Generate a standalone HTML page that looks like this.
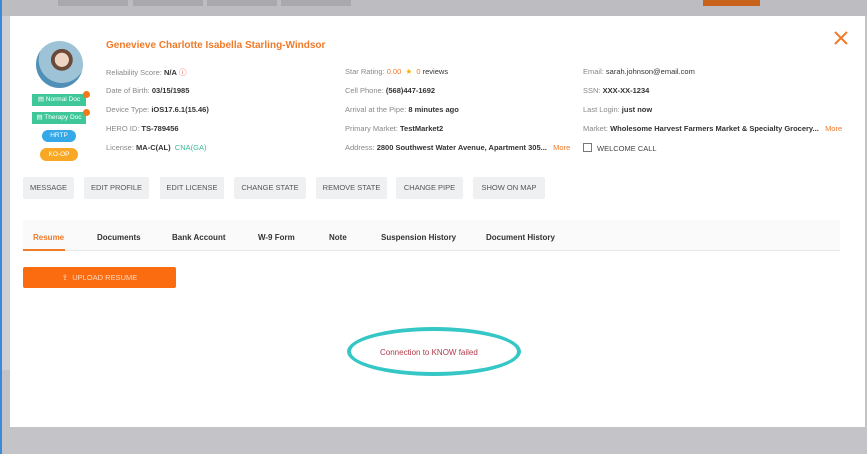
<!DOCTYPE html>
<html><head><meta charset="utf-8"><style>
*{box-sizing:border-box;margin:0;padding:0}
body{width:867px;height:454px;overflow:hidden;background:#c4c3c8;font-family:"Liberation Sans",sans-serif;position:relative}
.abs{position:absolute}
.modal{left:10px;top:16px;width:855px;height:411px;background:#fff}
.lbl{font-size:7.5px;color:#888;white-space:nowrap}
.lbl b{color:#333;font-weight:bold}
.btn{position:absolute;top:177px;height:22px;background:#eef0f2;color:#555;font-size:7.5px;line-height:22px;text-align:center;border-radius:2px}
.tab{position:absolute;top:233px;font-size:8px;color:#333;font-weight:bold}
.tag{position:absolute;font-size:6.5px;color:#fff;text-align:center}
</style></head><body>
<div class="abs" style="left:0;top:0;width:867px;height:16px;background:#bdbdc1"></div>
<div class="abs" style="left:58px;top:0;width:70px;height:6px;background:#a9a9ad"></div>
<div class="abs" style="left:133px;top:0;width:70px;height:6px;background:#a9a9ad"></div>
<div class="abs" style="left:207px;top:0;width:70px;height:6px;background:#a9a9ad"></div>
<div class="abs" style="left:281px;top:0;width:70px;height:6px;background:#a9a9ad"></div>
<div class="abs" style="left:703px;top:0;width:57px;height:6px;background:#c8611a"></div>
<div class="abs" style="left:0;top:0;width:2px;height:454px;background:#3a8ad8"></div>
<div class="abs" style="left:2px;top:16px;width:8px;height:354px;background:#d0d0d4"></div>
<div class="abs modal"></div>
<div class="abs" style="left:36px;top:41px;width:47px;height:47px;border-radius:50%;background:radial-gradient(circle at 55% 40%,#f0d5c5 0 18%,#6b4a3a 19% 28%,#9fc3d6 29% 60%,#4f8fb8 61%)"></div>
<div class="tag" style="left:32px;top:94px;width:54px;height:12px;line-height:12px;background:#3fc79a">▤ Normal Doc</div>
<div class="abs" style="left:83px;top:91px;width:7px;height:7px;border-radius:50%;background:#f07a1a"></div>
<div class="tag" style="left:32px;top:112px;width:54px;height:12px;line-height:12px;background:#3fc79a">▤ Therapy Doc</div>
<div class="abs" style="left:83px;top:109px;width:7px;height:7px;border-radius:50%;background:#f07a1a"></div>
<div class="tag" style="left:42px;top:130px;width:34px;height:12px;line-height:12px;background:#34a8e8;border-radius:6px">HRTP</div>
<div class="tag" style="left:40px;top:148px;width:38px;height:13px;line-height:13px;background:#f9a825;border-radius:7px">KO-OP</div>
<div class="abs" style="left:106px;top:40px;font-size:10px;color:#ef7a2a;font-weight:bold">Genevieve Charlotte Isabella Starling-Windsor</div>
<svg class="abs" style="left:834px;top:31px" width="14" height="14" viewBox="0 0 14 14"><path d="M1 1L13 13M13 1L1 13" stroke="#ef7a2a" stroke-width="2"/></svg>
<div class="abs lbl" style="left:106px;top:67px">Reliability Score: <b>N/A</b> <span style="color:#e44">ⓘ</span></div>
<div class="abs lbl" style="left:106px;top:86px">Date of Birth: <b>03/15/1985</b></div>
<div class="abs lbl" style="left:106px;top:105px">Device Type: <b>iOS17.6.1(15.46)</b></div>
<div class="abs lbl" style="left:106px;top:124px">HERO ID: <b>TS-789456</b></div>
<div class="abs lbl" style="left:106px;top:143px">License: <b>MA-C(AL)</b> &nbsp;<span style="color:#3bb89a">CNA(GA)</span></div>
<div class="abs lbl" style="left:345px;top:67px">Star Rating: <span style="color:#ef7a2a">0.00</span> &nbsp;<span style="color:#f5b301">★</span> &nbsp;<span style="color:#ef7a2a">0</span> <b style="font-weight:normal;color:#333">reviews</b></div>
<div class="abs lbl" style="left:345px;top:86px">Cell Phone: <b>(568)447-1692</b></div>
<div class="abs lbl" style="left:345px;top:105px">Arrival at the Pipe: <b>8 minutes ago</b></div>
<div class="abs lbl" style="left:345px;top:124px">Primary Market: <b>TestMarket2</b></div>
<div class="abs lbl" style="left:345px;top:143px">Address: <b>2800 Southwest Water Avenue, Apartment 305...</b> &nbsp;&nbsp;<span style="color:#ef7a2a">More</span></div>
<div class="abs lbl" style="left:583px;top:67px">Email: <b style="font-weight:normal">sarah.johnson@email.com</b></div>
<div class="abs lbl" style="left:583px;top:86px">SSN: <b>XXX-XX-1234</b></div>
<div class="abs lbl" style="left:583px;top:105px">Last Login: <b>just now</b></div>
<div class="abs lbl" style="left:583px;top:124px">Market: <b>Wholesome Harvest Farmers Market &amp; Specialty Grocery...</b> &nbsp;&nbsp;<span style="color:#ef7a2a">More</span></div>
<div class="abs" style="left:583px;top:143px;width:9px;height:9px;border:1px solid #777"></div>
<div class="abs lbl" style="left:597px;top:144px;color:#444">WELCOME CALL</div>
<div class="btn" style="left:23px;width:51px">MESSAGE</div>
<div class="btn" style="left:84px;width:65px">EDIT PROFILE</div>
<div class="btn" style="left:160px;width:64px">EDIT LICENSE</div>
<div class="btn" style="left:234px;width:72px">CHANGE STATE</div>
<div class="btn" style="left:316px;width:71px">REMOVE STATE</div>
<div class="btn" style="left:396px;width:67px">CHANGE PIPE</div>
<div class="btn" style="left:473px;width:72px">SHOW ON MAP</div>
<div class="abs" style="left:23px;top:220px;width:817px;height:31px;background:#fafafa;border-bottom:1px solid #e8e8e8"></div>
<div class="tab" style="left:33px;color:#ef7a2a">Resume</div>
<div class="abs" style="left:23px;top:249px;width:42px;height:2px;background:#ef7a2a"></div>
<div class="tab" style="left:97px">Documents</div>
<div class="tab" style="left:172px">Bank Account</div>
<div class="tab" style="left:258px">W-9 Form</div>
<div class="tab" style="left:329px">Note</div>
<div class="tab" style="left:381px">Suspension History</div>
<div class="tab" style="left:486px">Document History</div>
<div class="abs" style="left:23px;top:267px;width:153px;height:21px;background:#fb6c10;border-radius:2px;color:#ffd9c0;font-size:7.5px;line-height:21px;text-align:center">⇪ &nbsp;UPLOAD RESUME</div>
<div class="abs" style="left:347px;top:327px;width:174px;height:49px;border:4px solid #35c6c6;border-radius:50%"></div>
<div class="abs" style="left:380px;top:348px;font-size:8px;color:#b03a4a">Connection to KNOW failed</div>
</body></html>
